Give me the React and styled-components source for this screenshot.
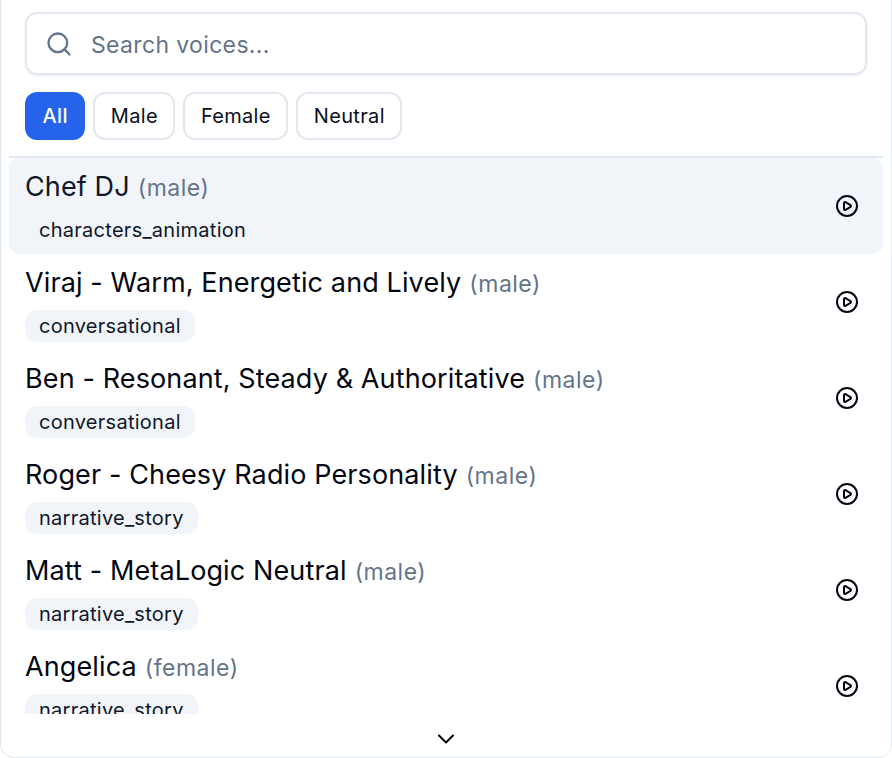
import React from 'react';
import styled, { createGlobalStyle } from 'styled-components';
import { Search, CirclePlay, ChevronDown } from 'lucide-react';

const GlobalStyle = createGlobalStyle`
  html, body {
    margin: 0;
    padding: 0;
    background: #fff;
    font-family: Inter, "Liberation Sans", sans-serif;
  }
  * { box-sizing: border-box; }
`;

const Panel = styled.div`
  width: 892px;
  height: 758px;
  display: flex;
  flex-direction: column;
  padding: 12px 8px 0;
  background: #fff;
  border: 1.5px solid #e2e8f0;
  border-top: none;
  border-radius: 0 0 14px 14px;
  overflow: hidden;
`;

const SearchBox = styled.div`
  height: 63px;
  margin: 0 16px;
  padding: 0 18px 0 18px;
  display: flex;
  align-items: center;
  gap: 17px;
  border: 2px solid #e2e8f0;
  border-radius: 12px;
  box-shadow: 0 1px 3px rgba(15, 23, 42, 0.08);
  flex-shrink: 0;
`;

const SearchInput = styled.input`
  flex: 1;
  height: 30px;
  margin: 3px 0 0 1px;
  border: none;
  outline: none;
  padding: 0;
  background: transparent;
  font: inherit;
  font-size: 23px;
  letter-spacing: 0.35px;
  color: #0f172a;
  &::placeholder { color: #64748b; opacity: 1; }
`;

const Filters = styled.div`
  display: flex;
  gap: 8px;
  margin: 17px 16px 16px;
  flex-shrink: 0;
`;

const FilterButton = styled.button`
  height: 48px;
  padding: 0 ${(p) => (p.$active ? '17.5px' : '15.5px')};
  font: inherit;
  font-size: 20px;
  font-weight: ${(p) => (p.$active ? 500 : 400)};
  letter-spacing: 0.33px;
  color: ${(p) => (p.$active ? '#fff' : '#0b1020')};
  background: ${(p) => (p.$active ? '#2563eb' : '#fff')};
  border: ${(p) => (p.$active ? 'none' : '2px solid #e2e8f0')};
  border-radius: 12px;
`;

const List = styled.div`
  flex: 0 0 558px;
  border-top: 2px solid #e2e8f0;
  overflow: hidden;
`;

const Row = styled.div`
  height: 96px;
  padding: 0 16px;
  display: flex;
  align-items: center;
  justify-content: space-between;
  border-radius: 10px;
  background: ${(p) => (p.$selected ? '#f1f5f9' : 'transparent')};
`;

const RowText = styled.div`
  display: flex;
  flex-direction: column;
  align-items: flex-start;
  gap: 6px;
`;

const Title = styled.div`
  font-size: 27px;
  line-height: 40px;
  letter-spacing: 0.12px;
  color: ${(p) => (p.$selected ? '#0f172a' : '#030712')};
`;

const Gender = styled.span`
  margin-left: 8px;
  font-size: 23px;
  letter-spacing: 0.5px;
  color: #64748b;
`;

const Tag = styled.span`
  height: 32px;
  padding: 0 14px;
  display: inline-flex;
  align-items: center;
  font-size: 20px;
  letter-spacing: 0.27px;
  color: #0f172a;
  background: #f1f5f9;
  border-radius: 12px;
`;

const PlayButton = styled.button`
  width: 24px;
  height: 24px;
  margin-right: 8px;
  padding: 0;
  display: flex;
  border: none;
  background: none;
  color: #030712;
`;

const Footer = styled.div`
  flex: 1;
  display: flex;
  justify-content: center;
  align-items: center;
  padding-top: 6px;
  color: #030712;
`;

const voices = [
  { name: 'Chef DJ', gender: 'male', tag: 'characters_animation' },
  { name: 'Viraj - Warm, Energetic and Lively', gender: 'male', tag: 'conversational' },
  { name: 'Ben - Resonant, Steady & Authoritative', gender: 'male', tag: 'conversational' },
  { name: 'Roger - Cheesy Radio Personality', gender: 'male', tag: 'narrative_story' },
  { name: 'Matt - MetaLogic Neutral', gender: 'male', tag: 'narrative_story' },
  { name: 'Angelica', gender: 'female', tag: 'narrative_story' },
];

const filters = ['All', 'Male', 'Female', 'Neutral'];

export default function App() {
  return (
    <Panel>
      <GlobalStyle />
      <SearchBox>
        <Search size={28} color="#64748b" strokeWidth={2} />
        <SearchInput placeholder="Search voices..." />
      </SearchBox>
      <Filters>
        {filters.map((f, i) => (
          <FilterButton key={f} $active={i === 0}>{f}</FilterButton>
        ))}
      </Filters>
      <List>
        {voices.map((v, i) => (
          <Row key={v.name} $selected={i === 0}>
            <RowText>
              <Title $selected={i === 0}>
                {v.name}
                <Gender>({v.gender})</Gender>
              </Title>
              <Tag>{v.tag}</Tag>
            </RowText>
            <PlayButton>
              <CirclePlay size={24} strokeWidth={2} />
            </PlayButton>
          </Row>
        ))}
      </List>
      <Footer>
        <ChevronDown size={28} strokeWidth={1.75} />
      </Footer>
    </Panel>
  );
}
